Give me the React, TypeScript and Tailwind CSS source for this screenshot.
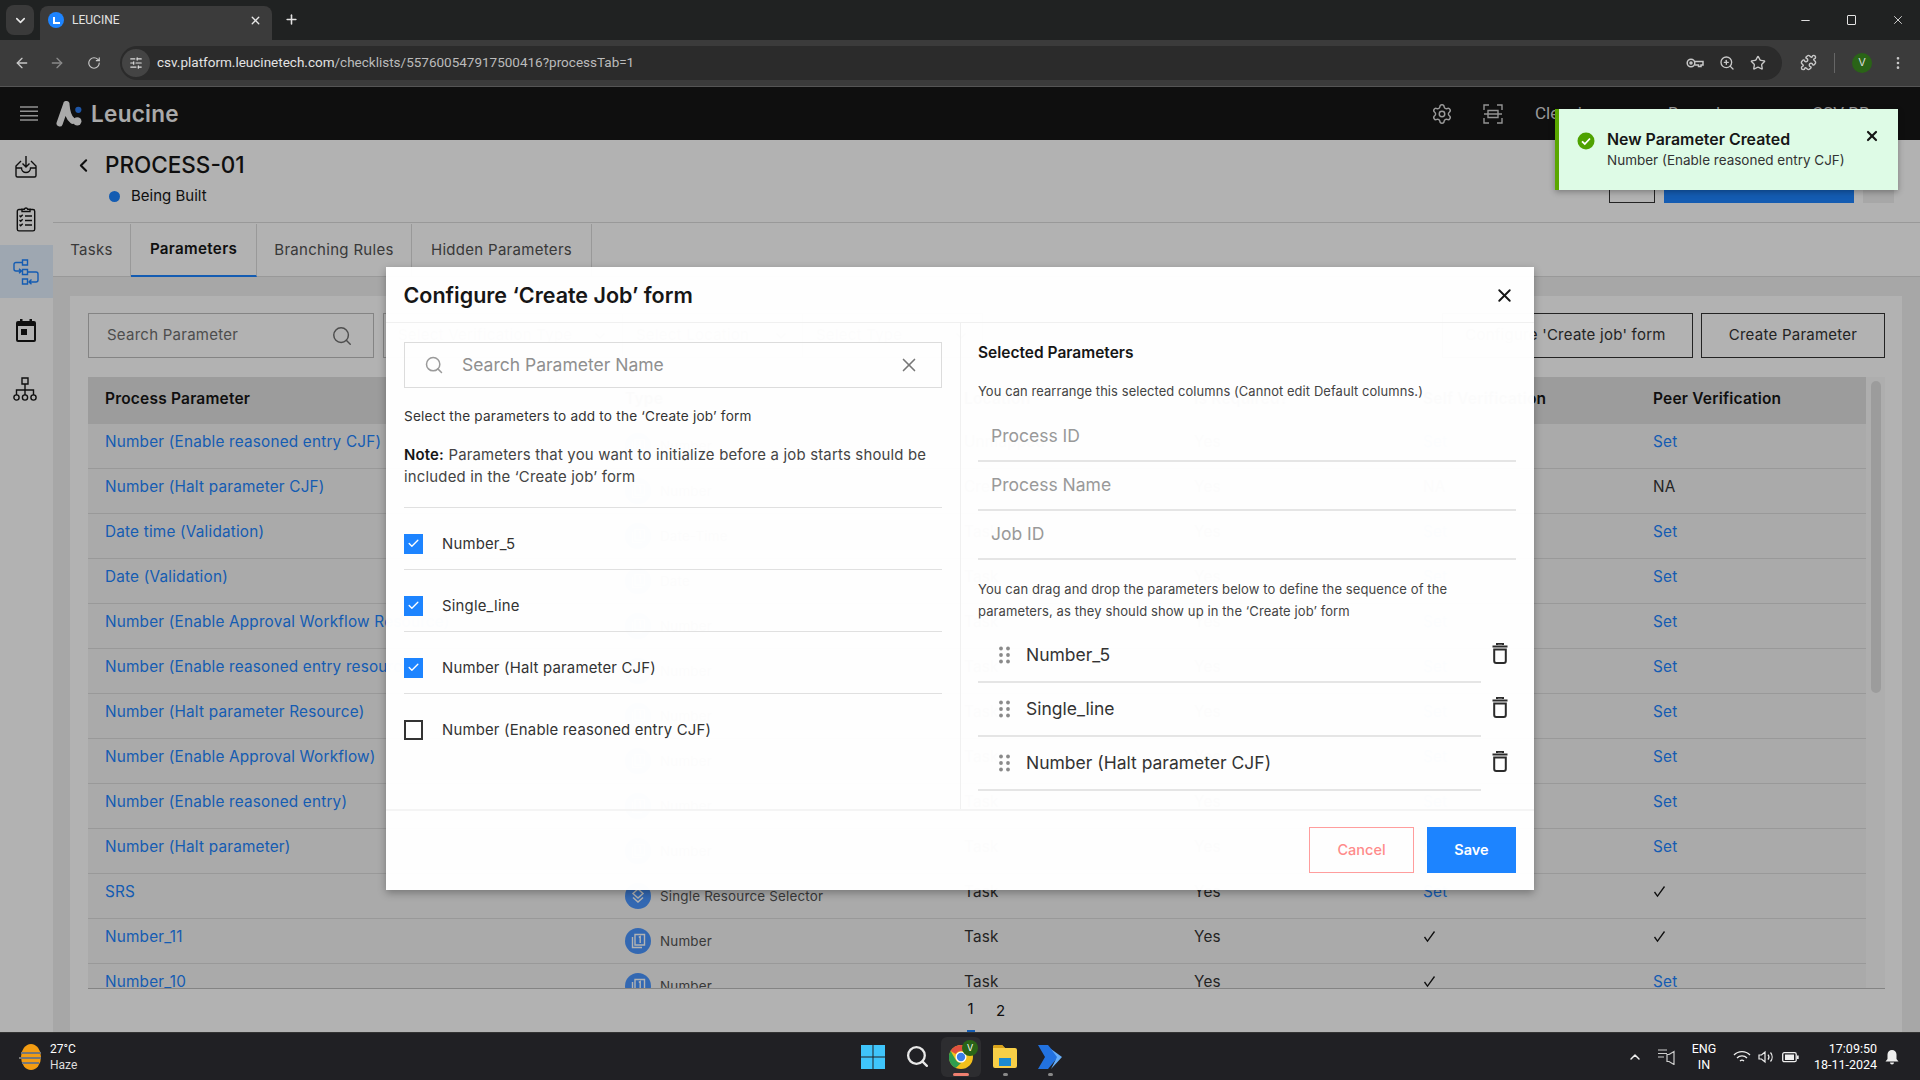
import React from "react";
import { ArrowLeft, ArrowRight, RotateCw, ChevronDown, ChevronLeft, ChevronUp, X, Plus, Settings, Search, Star, Puzzle, MoreVertical, ZoomIn, Minus, Check, SlidersHorizontal } from "lucide-react";

const rows: [string, string, string, string, string][] = [
  ["Number (Enable reasoned entry CJF)", "Number", "Unmapped", "Set", "Set"],
  ["Number (Halt parameter CJF)", "Number", "Create Job Form", "NA", "NA"],
  ["Date time (Validation)", "Date-Time", "Task", "Set", "Set"],
  ["Date (Validation)", "Date", "Task", "Set", "Set"],
  ["Number (Enable Approval Workflow Resource)", "Number", "Task", "Set", "Set"],
  ["Number (Enable reasoned entry resource)", "Number", "Task", "Set", "Set"],
  ["Number (Halt parameter Resource)", "Number", "Task", "Set", "Set"],
  ["Number (Enable Approval Workflow)", "Number", "Task", "Set", "Set"],
  ["Number (Enable reasoned entry)", "Number", "Task", "Set", "Set"],
  ["Number (Halt parameter)", "Number", "Task", "Set", "Set"],
  ["SRS", "Single Resource Selector", "Task", "Set", "check"],
  ["Number_11", "Number", "Task", "check", "check"],
  ["Number_10", "Number", "Task", "check", "Set"],
];

function TypeIcon({ type }: { type: string }) {
  return (
    <svg width="26" height="26" viewBox="0 0 26 26" className="shrink-0">
      <circle cx="13" cy="13" r="13" fill="#4a96ff" />
      {type === "Single Resource Selector" ? (
        <g fill="none" stroke="#fff" strokeWidth="1.5">
          <path d="M13 6l5 4.500-5 4.500-5-4.500z" />
          <path d="M8 14.500l5 4.500 5-4.500" />
        </g>
      ) : (
        <g fill="none" stroke="#fff" strokeWidth="1.4">
          <path d="M10 6.500h9.500v10.500H10z" />
          <path d="M7.500 9v10.500H17" />
          <path d="M13.800 9.300l1.400-.8V15" />
        </g>
      )}
    </svg>
  );
}

function Cell({ v }: { v: string }) {
  if (v === "check")
    return (
      <svg width="13" height="13" viewBox="0 0 13 13" className="mt-[2px]">
        <path d="M1.500 7l3 4.200L11.500 1.500" fill="none" stroke="#161616" strokeWidth="1.3" />
      </svg>
    );
  if (v === "Set") return <span className="text-[#1d84ff]">Set</span>;
  return <span className="text-[#333]">{v}</span>;
}

function Inbox() {
  return (
    <svg width="24" height="24" viewBox="0 0 24 24" fill="none" stroke="#161616" strokeWidth="1.4">
      <path d="M12 1v11M8.500 8.500L12 12l3.500-3.500" />
      <path d="M7 6L2 11v9.500a1.500 1.500 0 0 0 1.500 1.500h17a1.500 1.500 0 0 0 1.500-1.500V11l-5-5" />
      <path d="M2 13h5.500a4.500 4.500 0 0 0 9 0H22" />
    </svg>
  );
}
function Clip() {
  return (
    <svg width="20" height="26" viewBox="0 0 20 26" fill="none" stroke="#161616" strokeWidth="1.4">
      <path d="M6 3.500H3A1.700 1.700 0 0 0 1.300 5.200v18A1.700 1.700 0 0 0 3 24.900h14a1.700 1.700 0 0 0 1.700-1.700v-18A1.700 1.700 0 0 0 17 3.500h-3" />
      <path d="M6 5.500V3.200h2.300a1.800 1.800 0 0 1 3.400 0H14v2.300z" />
      <path d="M9 10h7M9 14.500h7M9 19h7M3.500 9.500l1.200 1.200 2-2M3.500 14l1.200 1.200 2-2M3.500 18.500l1.200 1.200 2-2" />
    </svg>
  );
}
function Flow() {
  return (
    <svg width="26" height="26" viewBox="0 0 26 26" fill="none" stroke="#1d84ff" strokeWidth="1.4">
      <path d="M9.500 1h5v5h-5zM9.500 10.500h5v5h-5zM9.500 20h5v5h-5z" />
      <path d="M9 3.500H3a2 2 0 0 0-2 2V10a2 2 0 0 0 2 2h5M6 9.800l2.500 2.200L6 14.300" />
      <path d="M15 13h8a2 2 0 0 1 2 2v6a2 2 0 0 1-2 2h-7M18.500 20.500L16 23l2.500 2.200" />
    </svg>
  );
}
function Cal() {
  return (
    <svg width="20" height="23" viewBox="0 0 20 23">
      <path d="M4 0h2.500v2h7V0H16v2h2a2 2 0 0 1 2 2v17a2 2 0 0 1-2 2H2a2 2 0 0 1-2-2V4a2 2 0 0 1 2-2h2z" fill="#161616" />
      <rect x="2" y="7" width="16" height="14" fill="#fff" />
      <rect x="5" y="10" width="6" height="6" fill="#161616" />
    </svg>
  );
}
function Org() {
  return (
    <svg width="24" height="24" viewBox="0 0 24 24" fill="none" stroke="#161616" strokeWidth="1.4">
      <path d="M9 1h6v6H9zM12 7v6M3.500 18v-5h17v5M12 13v5" />
      <circle cx="3.500" cy="20.500" r="2.600" />
      <circle cx="12" cy="20.500" r="2.600" />
      <circle cx="20.500" cy="20.500" r="2.600" />
    </svg>
  );
}
function Scan() {
  return (
    <svg width="20" height="20" viewBox="0 0 20 20" fill="none" stroke="#d4d4d4" strokeWidth="1.4">
      <path d="M1 6V1h5M14 1h5v5M1 14v5h5M14 19h5v-5M1 10h18M5 10V6.500h10V10M5 10v3.500h10V10" />
    </svg>
  );
}
function Hamburger() {
  return (
    <svg width="18" height="15" viewBox="0 0 18 15" stroke="#d0d0d0" strokeWidth="1.5">
      <path d="M0 1h18M0 5.300h18M0 9.700h18M0 14h18" />
    </svg>
  );
}
function Key() {
  return (
    <svg width="18" height="12" viewBox="0 0 18 12" fill="none" stroke="#c8c8c8" strokeWidth="1.5">
      <circle cx="5" cy="6" r="3.800" />
      <circle cx="5" cy="6" r="1" />
      <path d="M8.800 4.500h8.200v3.500h-2v1.500h-2.500V8H8.800" />
    </svg>
  );
}
function Grip() {
  return (
    <svg width="11" height="18" viewBox="0 0 11 18" fill="#8a8a8a" className="shrink-0">
      <circle cx="2" cy="2.500" r="1.900" />
      <circle cx="9" cy="2.500" r="1.900" />
      <circle cx="2" cy="9" r="1.900" />
      <circle cx="9" cy="9" r="1.900" />
      <circle cx="2" cy="15.500" r="1.900" />
      <circle cx="9" cy="15.500" r="1.900" />
    </svg>
  );
}
function Trash() {
  return (
    <svg width="16" height="21" viewBox="0 0 16 21" fill="none" className="shrink-0">
      <path d="M.5 3.500h15M5 2V.8h6V2" stroke="#2b2b2b" strokeWidth="2" />
      <path d="M2.200 6.500h11.600V18a2 2 0 0 1-2 2H4.200a2 2 0 0 1-2-2z" stroke="#2b2b2b" strokeWidth="2" />
    </svg>
  );
}
function CheckBox({ on }: { on: boolean }) {
  return on ? (
    <div className="w-[19px] h-[20px] bg-[#1d84ff] flex items-center justify-center shrink-0">
      <Check size={13} color="#fff" strokeWidth={2.5} />
    </div>
  ) : (
    <div className="w-[19px] h-[20px] border-2 border-[#333] shrink-0" />
  );
}
function Windows() {
  return (
    <svg width="24" height="24" viewBox="0 0 24 24">
      <path d="M0 0h11.500v11.500H0zM12.500 0H24v11.500H12.500zM0 12.500h11.500V24H0zM12.500 12.500H24V24H12.500z" fill="#3fc5fb" />
    </svg>
  );
}
function ChromeIcon() {
  return (
    <svg width="24" height="24" viewBox="0 0 24 24">
      <circle cx="12" cy="12" r="12" fill="#f3c01c" />
      <path d="M12 0a12 12 0 0 1 10.400 6H12a6 6 0 0 0-5.200 3L1.600 6A12 12 0 0 1 12 0z" fill="#e0503f" />
      <path d="M1.600 6l5.200 9a6 6 0 0 0 5.200 3l-5.200 5A12 12 0 0 1 1.600 6z" fill="#2f9e4f" />
      <circle cx="12" cy="12" r="5.500" fill="#fff" />
      <circle cx="12" cy="12" r="4.200" fill="#3b7de8" />
    </svg>
  );
}

export default function App() {
  return (
    <div className="w-[1920px] h-[1080px] overflow-hidden flex flex-col [font-family:Inter,sans-serif] bg-white">
      {/* tab strip */}
      <div className="h-[40px] bg-[#202222] flex items-end shrink-0">
        <div className="ml-[6px] mb-[5px] w-[28px] h-[30px] rounded-lg bg-[#3a3a3a] flex items-center justify-center">
          <ChevronDown size={15} color="#e8e8e8" strokeWidth={2.5} />
        </div>
        <div className="ml-[6px] w-[232px] h-[34px] bg-[#3b3b3b] rounded-t-lg flex items-center pl-[8px] pr-[10px] pb-[6px]">
          <div className="w-[16px] h-[16px] rounded-full bg-[#1d84ff] flex items-center justify-center">
            <div className="w-[7px] h-[7px] border-l-2 border-b-2 border-white" />
          </div>
          <span className="ml-[8px] text-[12px] text-[#e3e3e3] [font-family:Roboto,sans-serif]">LEUCINE</span>
          <X size={13} color="#e8e8e8" className="ml-auto" strokeWidth={2.5} />
        </div>
        <Plus size={15} color="#e3e3e3" className="ml-[12px] mb-[13px]" strokeWidth={2.5} />
        <div className="ml-auto flex items-center h-[40px] pr-[15px] gap-[35px]">
          <Minus size={13} color="#e3e3e3" strokeWidth={1.8} />
          <div className="w-[9px] h-[10px] border border-[#e3e3e3] rounded-[1px]" />
          <X size={14} color="#e3e3e3" strokeWidth={1.5} />
        </div>
      </div>
      {/* toolbar */}
      <div className="h-[47px] bg-[#3b3b3b] border-b border-[#555] flex items-center shrink-0 pb-[1px]">
        <ArrowLeft size={16} color="#c8c8c8" className="ml-[14px]" strokeWidth={2} />
        <ArrowRight size={16} color="#8a8a8a" className="ml-[19px]" strokeWidth={2} />
        <RotateCw size={14} color="#c8c8c8" className="ml-[22px]" strokeWidth={2} />
        <div className="ml-[19px] w-[1662px] h-[34px] rounded-full bg-[#2b2b2b] flex items-center pl-[2px] pr-[16px]">
          <div className="w-[28px] h-[28px] rounded-full bg-[#444] flex items-center justify-center">
            <SlidersHorizontal size={14} color="#ddd" />
          </div>
          <span className="ml-[7px] text-[13.500px] text-[#e3e3e3] [font-family:Roboto,sans-serif]">csv.platform.leucinetech.com<span className="text-[#bbb]">/checklists/557600547917500416?processTab=1</span></span>
          <div className="ml-auto flex items-center gap-[15px]">
            <Key />
            <ZoomIn size={16} color="#c8c8c8" />
            <Star size={16} color="#c8c8c8" />
          </div>
        </div>
        <Puzzle size={17} color="#c8c8c8" className="ml-[18px]" />
        <div className="ml-[17px] w-px h-[20px] bg-[#666]" />
        <div className="ml-[17px] w-[20px] h-[20px] rounded-full bg-[#2a6417] flex items-center justify-center text-[11px] text-[#ddd]">V</div>
        <MoreVertical size={16} color="#c8c8c8" className="ml-[18px]" />
      </div>

      {/* application */}
      <div className="relative flex-1 flex flex-col overflow-hidden">
        <div className="h-[53px] bg-[#161616] flex items-center shrink-0">
          <div className="ml-[20px]"><Hamburger /></div>
          <svg width="27" height="27" viewBox="0 0 26 26" className="ml-[18px]">
            <path d="M3.500 22.500L10 4M10 4c.5 7 2 13 6 16" fill="none" stroke="#f4f4f4" strokeWidth="6" strokeLinecap="round" />
            <circle cx="21.500" cy="9.500" r="3" fill="#2b7bef" />
            <circle cx="20.500" cy="20.500" r="4" fill="#f4f4f4" />
          </svg>
          <span className="ml-[8px] mt-[1px] text-[22.500px] font-semibold tracking-[0.3px] text-[#f4f4f4]">Leucine</span>
          <div className="ml-auto flex items-center">
            <Settings size={22} color="#dddddd" strokeWidth={1.6} />
            <div className="ml-[30px]"><Scan /></div>
            <span className="ml-[32px] w-[133px] text-[17px] text-[#dddddd] [font-family:Roboto,sans-serif]">Cleaning</span>
            <span className="w-[144px] text-[17px] text-[#dddddd] [font-family:Roboto,sans-serif]">Bangalore</span>
            <span className="w-[108px] text-[17px] text-[#dddddd] [font-family:Roboto,sans-serif]">CSV-BB</span>
          </div>
        </div>

        <div className="flex-1 flex overflow-hidden">
          {/* sidebar */}
          <div className="w-[53px] bg-white flex flex-col items-stretch shrink-0 shadow-[1px_0_2px_rgba(0,0,0,0.08)]">
            <div className="h-[53px] flex items-center justify-center pr-[2px]"><Inbox /></div>
            <div className="h-[52px] flex items-center justify-center pr-[1px]"><Clip /></div>
            <div className="h-[53px] flex items-center justify-center bg-[#e3effe] pr-[2px]"><Flow /></div>
            <div className="h-[64px] flex items-center justify-center pr-[1px]"><Cal /></div>
            <div className="h-[54px] flex items-center justify-center pr-[4px]"><Org /></div>
          </div>

          <div className="flex-1 flex flex-col min-w-0">
            {/* page header */}
            <div className="h-[82px] bg-white flex justify-between shrink-0">
              <div className="pl-[20px] pt-[11px]">
                <div className="flex items-center h-[28px]">
                  <ChevronLeft size={21} color="#161616" strokeWidth={2.4} />
                  <span className="ml-[11px] text-[22.500px] font-medium text-[#161616]">PROCESS-01</span>
                </div>
                <div className="flex items-center mt-[6px] ml-[36px]">
                  <div className="w-[11px] h-[11px] rounded-full bg-[#1d84ff]" />
                  <span className="ml-[11px] text-[15px] text-[#161616]">Being Built</span>
                </div>
              </div>
              <div className="flex pt-[15px] pr-[26px] h-[63px]">
                <div className="w-[46px] h-[48px] border border-[#333]" />
                <div className="ml-[9px] w-[190px] h-[48px] bg-[#1d84ff]" />
                <div className="ml-[9px] w-[31px] h-[48px] bg-[#f0f0f0]" />
              </div>
            </div>
            {/* tabs */}
            <div className="h-[55px] bg-white border-y border-[#dcdcdc] flex shrink-0 text-[15px] tracking-[0.3px] pt-[1px]">
              <div className="w-[78px] border-r border-[#dcdcdc] flex items-center justify-center text-[#525252]">Tasks</div>
              <div className="w-[126px] -mb-px border-r border-[#dcdcdc] border-b-2 border-b-[#1d84ff] flex items-center justify-center font-semibold text-[15.200px] text-[#161616]">Parameters</div>
              <div className="w-[155px] border-r border-[#dcdcdc] flex items-center justify-center text-[#525252]">Branching Rules</div>
              <div className="w-[180px] border-r border-[#dcdcdc] flex items-center justify-center text-[#525252]">Hidden Parameters</div>
            </div>
            {/* main */}
            <div className="flex-1 bg-[#f0f0f0] pl-[17px] pr-[18px] pt-[19px] min-h-0">
              <div className="h-full bg-white pl-[18px] pr-[17px] pt-[17px] flex flex-col">
                <div className="flex h-[45px] shrink-0 text-[15px] tracking-[0.25px]">
                  <div className="w-[286px] border border-[#bdbdbd] flex items-center pl-[18px] pr-[20px] text-[#6f6f6f]">
                    Search Parameter
                    <Search size={22} color="#6f6f6f" className="ml-auto" strokeWidth={1.6} />
                  </div>
                  <div className="ml-[9px] w-[240px] border border-[#bdbdbd] flex items-center px-[14px] text-[#6f6f6f]">
                    Select Verification Type
                    <ChevronDown size={16} className="ml-auto" />
                  </div>
                  <div className="w-[180px] border-y border-r border-[#bdbdbd] flex items-center px-[13px] text-[#6f6f6f]">
                    Select Location
                    <ChevronDown size={16} className="ml-auto" />
                  </div>
                  <div className="w-[180px] border-y border-r border-[#bdbdbd] flex items-center px-[13px] text-[#6f6f6f]">
                    Select Type
                    <ChevronDown size={16} className="ml-auto" />
                  </div>
                  <div className="ml-auto w-[251px] border border-[#333] flex items-center justify-center text-[#333] pr-[4px]">Configure 'Create job' form</div>
                  <div className="ml-[8px] w-[184px] border border-[#333] flex items-center justify-center text-[#333]">Create Parameter</div>
                </div>

                <div className="mt-[19px] h-[612px] flex border-b border-[#bdbdbd] shrink-0">
                  <div className="w-[1778px] overflow-hidden text-[15.300px] tracking-[0.2px]">
                    <div className="grid grid-cols-[520px_339px_230px_229px_230px_230px] h-[47px] bg-[#e0e0e0] items-center font-semibold text-[15.500px] text-[#161616] pb-[3px]">
                      <div className="pl-[17px]">Process Parameter</div>
                      <div className="pl-[17px]">Type</div>
                      <div className="pl-[17px]">Location</div>
                      <div className="pl-[17px]">Is Required?</div>
                      <div className="pl-[17px]">Self Verification</div>
                      <div className="pl-[17px]">Peer Verification</div>
                    </div>
                    {rows.map((r, i) => (
                      <div key={i} className="grid grid-cols-[520px_339px_230px_229px_230px_230px] h-[45px] bg-[#f4f4f4] border-b border-[#dcdcdc] leading-[36px]">
                        <div className="pl-[17px] text-[#1d84ff] whitespace-nowrap">{r[0]}</div>
                        <div className="pl-[17px] flex items-center text-[13.400px] text-[#525252] pb-[1px]">
                          <TypeIcon type={r[1]} />
                          <span className="ml-[9px] leading-[18px]">{r[1]}</span>
                        </div>
                        <div className="pl-[17px] text-[#333]">{r[2]}</div>
                        <div className="pl-[17px] text-[#333]">Yes</div>
                        <div className="pl-[17px] flex items-start pt-[9px] leading-[18px]"><Cell v={r[3]} /></div>
                        <div className="pl-[17px] flex items-start pt-[9px] leading-[18px]"><Cell v={r[4]} /></div>
                      </div>
                    ))}
                  </div>
                  <div className="w-[19px] pt-[4px] flex justify-center bg-[#fafafa]">
                    <div className="w-[10px] h-[312px] rounded-full bg-[#e0e0e0]" />
                  </div>
                </div>

                <div className="h-[44px] flex justify-center gap-[22px] text-[15px] text-[#161616] shrink-0 pr-[2px]">
                  <div className="w-[8px] flex items-center justify-center border-b-[3px] border-[#1d84ff]">1</div>
                  <div className="w-[8px] flex items-center justify-center">2</div>
                </div>
              </div>
            </div>
          </div>
        </div>

        {/* backdrop */}
        <div className="absolute inset-0 bg-black/30" />

        {/* modal */}
        <div className="absolute left-[386px] top-[180px] w-[1148px] h-[623px] bg-white/[.985] shadow-[0_3px_8px_rgba(0,0,0,0.3)] flex flex-col">
          <div className="h-[56px] border-b border-[#f0f0f0] flex items-center justify-between pl-[17.500px] pr-[19px] pt-[1px] shrink-0">
            <span className="text-[21.500px] font-semibold text-[#161616]">Configure ‘Create Job’ form</span>
            <X size={21} color="#161616" strokeWidth={2.2} />
          </div>
          <div className="flex-1 flex min-h-0">
            <div className="w-[575px] border-r border-[#f0f0f0] pl-[18px] pr-[18px] pt-[19px]">
              <div className="h-[46px] border border-[#dcdcdc] flex items-center pl-[19px] pr-[21px]">
                <Search size={20} color="#9a9a9a" strokeWidth={1.8} />
                <span className="ml-[18px] text-[17.500px] text-[#8f8f8f]">Search Parameter Name</span>
                <X size={22} color="#777" className="ml-auto" strokeWidth={1.8} />
              </div>
              <div className="mt-[17px] text-[13.600px] leading-[22px] tracking-[0.2px] text-[#333]">Select the parameters to add to the ‘Create job’ form</div>
              <div className="mt-[18px] text-[14.900px] leading-[21.500px] tracking-[0.2px] text-[#444] whitespace-nowrap">
                <b className="font-semibold text-[#161616]">Note:</b> Parameters that you want to initialize before a job starts should be
                <br />
                included in the ‘Create job’ form
              </div>
              <div className="mt-[19px] border-t border-[#e0e0e0]">
                {[
                  ["Number_5", true],
                  ["Single_line", true],
                  ["Number (Halt parameter CJF)", true],
                  ["Number (Enable reasoned entry CJF)", false],
                ].map(([l, on], i) => (
                  <div key={i} className={"h-[62px] flex items-center pt-[10px] " + (i < 3 ? "border-b border-[#e0e0e0]" : "")}>
                    <CheckBox on={on as boolean} />
                    <span className="ml-[19px] pt-[1px] text-[14.900px] tracking-[0.2px] text-[#333]">{l as string}</span>
                  </div>
                ))}
              </div>
            </div>
            <div className="flex-1 pl-[17px] pr-[18px] pt-[21px]">
              <div className="text-[15.500px] leading-[18px] font-semibold text-[#161616]">Selected Parameters</div>
              <div className="mt-[21px] text-[12.900px] leading-[18px] tracking-[0.1px] text-[#444]">You can rearrange this selected columns (Cannot edit Default columns.)</div>
              <div className="mt-[12px]">
                {["Process ID", "Process Name", "Job ID"].map((t) => (
                  <div key={t} className="h-[49px] border-b-2 border-[#e5e5e5] flex items-center pl-[13px] text-[17.500px] text-[#999]">{t}</div>
                ))}
              </div>
              <div className="mt-[18px] text-[13px] leading-[22px] tracking-[0.1px] text-[#444]">You can drag and drop the parameters below to define the sequence of the parameters, as they should show up in the ‘Create job’ form</div>
              <div className="mt-[7px]">
                {["Number_5", "Single_line", "Number (Halt parameter CJF)"].map((t) => (
                  <div key={t} className="h-[54px] flex items-center">
                    <div className="w-[503px] h-full border-b-2 border-[#e5e5e5] flex items-center pl-[21px] text-[17.500px] text-[#333]">
                      <Grip />
                      <span className="ml-[16px]">{t}</span>
                    </div>
                    <div className="ml-[11px] -mt-[5px]"><Trash /></div>
                  </div>
                ))}
              </div>
            </div>
          </div>
          <div className="h-[81px] border-t-2 border-[#f4f4f4] flex items-center justify-end pr-[18px] pb-[2px] gap-[13px] shrink-0">
            <div className="w-[105px] h-[46px] border-[1.500px] border-[#ff9d9d] flex items-center justify-center text-[14.500px] font-medium text-[#ff8a8a]">Cancel</div>
            <div className="w-[89px] h-[46px] bg-[#1d84ff] flex items-center justify-center text-[14.500px] font-semibold text-white">Save</div>
          </div>
        </div>

        {/* toast */}
        <div className="absolute left-[1555px] top-[22px] w-[343px] h-[81px] bg-[#defbe6] border-l-4 border-[#5aa700] shadow-[0_2px_6px_rgba(0,0,0,0.3)] flex">
          <svg width="18" height="18" viewBox="0 0 18 18" className="ml-[18px] mt-[23px] shrink-0">
            <circle cx="9" cy="9" r="8.500" fill="#4ea200" />
            <path d="M5 9.300l2.800 2.700L13 6.500" fill="none" stroke="#fff" strokeWidth="1.800" />
          </svg>
          <div className="ml-[12px] pt-[19.500px]">
            <div className="text-[15.900px] leading-[22px] font-semibold text-[#161616]">New Parameter Created</div>
            <div className="-mt-[.5px] text-[13.500px] leading-[20px] text-[#333]">Number (Enable reasoned entry CJF)</div>
          </div>
          <X size={16} color="#161616" strokeWidth={3.2} className="absolute right-[18px] top-[19px]" />
        </div>
      </div>

      {/* taskbar */}
      <div className="h-[48px] bg-[#202024] border-t border-[#333] flex items-center shrink-0 text-white">
        <div className="w-[861px] flex items-center pl-[19px] shrink-0">
          <svg width="24" height="26" viewBox="0 0 24 26">
            <ellipse cx="12" cy="13" rx="10" ry="13" fill="#f39c12" />
            <path d="M2 9h20M0 14h22M3 19h17" stroke="#777" strokeWidth="2" />
          </svg>
          <div className="ml-[7px] text-[12px] leading-[16px] [font-family:Roboto,sans-serif]">
            <div>27°C</div>
            <div className="text-[#ddd]">Haze</div>
          </div>
        </div>
        <Windows />
        <Search size={25} color="#e8e8e8" className="ml-[20px]" strokeWidth={2.2} />
        <div className="relative ml-[11px] w-[40px] h-[40px] rounded-md bg-[#2d2d30] flex items-center justify-center">
          <ChromeIcon />
          <div className="absolute left-[21px] top-[3px] w-[16px] h-[16px] rounded-full bg-[#2a6417] flex items-center justify-center text-[9px]">V</div>
          <div className="absolute left-[12px] bottom-[1px] w-[16px] h-[3px] rounded-full bg-[#f08070]" />
        </div>
        <div className="relative ml-[12px] w-[24px] h-[40px] flex items-center">
          <svg width="24" height="23" viewBox="0 0 24 23">
            <path d="M0 2a2 2 0 0 1 2-2h7l3 3h10a2 2 0 0 1 2 2v16a2 2 0 0 1-2 2H2a2 2 0 0 1-2-2z" fill="#f8cf47" />
            <path d="M0 2a2 2 0 0 1 2-2h7l3 3H0z" fill="#d9a21b" />
            <rect x="6" y="13" width="12" height="8" fill="#1b8ad0" />
          </svg>
          <div className="absolute left-[10px] bottom-[1px] w-[5px] h-[3px] rounded-full bg-[#888]" />
        </div>
        <div className="relative ml-[21px] w-[24px] h-[40px] flex items-center">
          <svg width="24" height="24" viewBox="0 0 24 24">
            <path d="M0 0h10l10 12-10 12H0l7-12z" fill="#2272e0" />
            <path d="M13 4l11 8-11 12 6-12z" fill="#66aef8" />
          </svg>
          <div className="absolute left-[10px] bottom-[1px] w-[5px] h-[3px] rounded-full bg-[#888]" />
        </div>
        <div className="ml-auto flex items-center [font-family:Roboto,sans-serif]">
          <ChevronUp size={16} color="#eee" strokeWidth={2.2} />
          <svg width="18" height="16" viewBox="0 0 18 16" fill="none" stroke="#ccc" strokeWidth="1.200" className="ml-[15px]">
            <path d="M0 1h9M0 4.500h9M0 8h6M11 5.500l5-3v13l-5-3H9v-7z" />
          </svg>
          <div className="ml-[10px] w-[36px] text-center text-[12.500px] leading-[16px]">
            <div>ENG</div>
            <div>IN</div>
          </div>
          <svg width="18" height="14" viewBox="0 0 18 14" fill="none" stroke="#eee" strokeWidth="1.300" className="ml-[11px]">
            <path d="M1 5a11 11 0 0 1 16 0M4 8a7 7 0 0 1 10 0M7 11a3 3 0 0 1 4 0" />
          </svg>
          <svg width="16" height="14" viewBox="0 0 16 14" fill="none" stroke="#eee" strokeWidth="1.200" className="ml-[7px]">
            <path d="M1 5v4h2.500L7 12V2L3.500 5zM10 4.500a4 4 0 0 1 0 5M12.500 2.500a7 7 0 0 1 0 9" />
          </svg>
          <svg width="17" height="12" viewBox="0 0 17 12" className="ml-[8px]">
            <rect x=".7" y="1.700" width="13.500" height="9" rx="1.500" fill="none" stroke="#eee" strokeWidth="1.300" />
            <rect x="3" y="3.500" width="9" height="5.500" fill="#eee" />
            <rect x="15" y="4.500" width="1.700" height="3.500" fill="#eee" />
          </svg>
          <div className="ml-[10px] w-[68px] text-right text-[12.500px] leading-[16px] whitespace-nowrap">
            <div>17:09:50</div>
            <div>18-11-2024</div>
          </div>
          <svg width="14" height="16" viewBox="0 0 14 16" fill="#eee" className="ml-[8px] mr-[21px]">
            <path d="M7 1a4.500 4.500 0 0 1 4.500 4.500V10l2 2.500H.5l2-2.500V5.500A4.500 4.500 0 0 1 7 1zM5 13.500h4a2 2 0 0 1-4 0z" />
          </svg>
        </div>
      </div>
    </div>
  );
}
